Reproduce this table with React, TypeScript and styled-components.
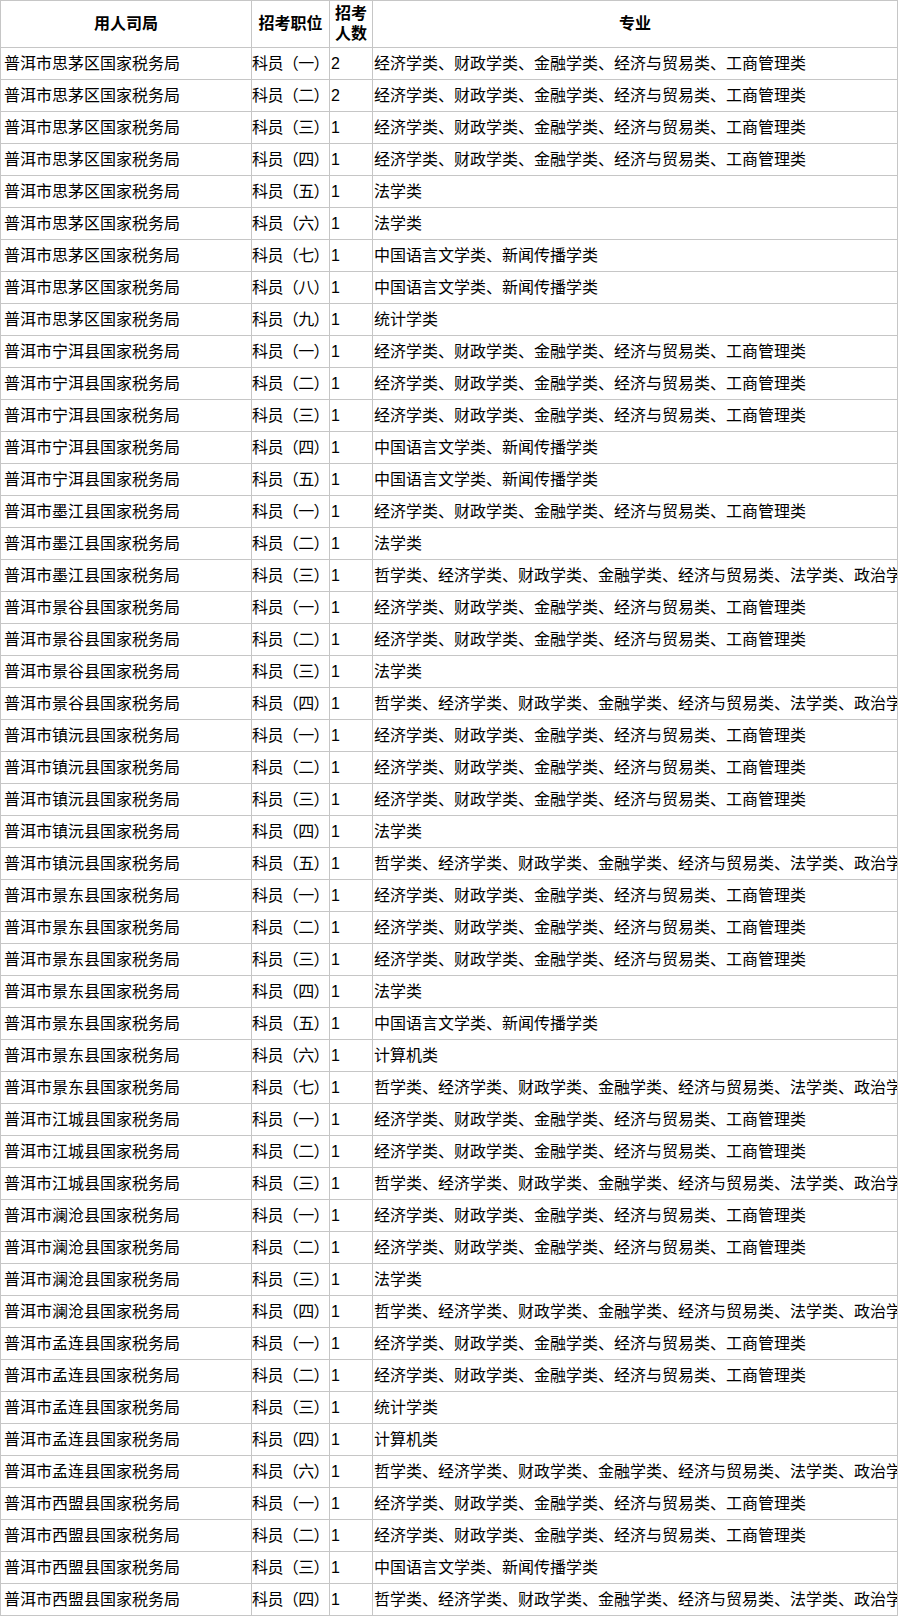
import React from "react";
import styled, { createGlobalStyle } from "styled-components";

const GlobalStyle = createGlobalStyle`
    html, body {
        margin: 0;
        padding: 0;
        background: #ffffff;
    }
    body {
        font-family: "Liberation Sans", "Noto Sans CJK SC", sans-serif;
        color: #000000;
    }
`;

const ECON = "经济学类、财政学类、金融学类、经济与贸易类、工商管理类";
const LAW = "法学类";
const CHN = "中国语言文学类、新闻传播学类";
const STAT = "统计学类";
const COMP = "计算机类";
const PHIL =
    "哲学类、经济学类、财政学类、金融学类、经济与贸易类、法学类、政治学类、社会学类";

const NUMS = ["一", "二", "三", "四", "五", "六", "七", "八", "九"];

type Row = {
    county: string;
    no: number;
    count: number;
    major: string;
};

const r = (county: string, no: number, major: string, count = 1): Row => ({
    county,
    no,
    count,
    major,
});

const rows: Row[] = [
    r("思茅区", 1, ECON, 2),
    r("思茅区", 2, ECON, 2),
    r("思茅区", 3, ECON),
    r("思茅区", 4, ECON),
    r("思茅区", 5, LAW),
    r("思茅区", 6, LAW),
    r("思茅区", 7, CHN),
    r("思茅区", 8, CHN),
    r("思茅区", 9, STAT),
    r("宁洱县", 1, ECON),
    r("宁洱县", 2, ECON),
    r("宁洱县", 3, ECON),
    r("宁洱县", 4, CHN),
    r("宁洱县", 5, CHN),
    r("墨江县", 1, ECON),
    r("墨江县", 2, LAW),
    r("墨江县", 3, PHIL),
    r("景谷县", 1, ECON),
    r("景谷县", 2, ECON),
    r("景谷县", 3, LAW),
    r("景谷县", 4, PHIL),
    r("镇沅县", 1, ECON),
    r("镇沅县", 2, ECON),
    r("镇沅县", 3, ECON),
    r("镇沅县", 4, LAW),
    r("镇沅县", 5, PHIL),
    r("景东县", 1, ECON),
    r("景东县", 2, ECON),
    r("景东县", 3, ECON),
    r("景东县", 4, LAW),
    r("景东县", 5, CHN),
    r("景东县", 6, COMP),
    r("景东县", 7, PHIL),
    r("江城县", 1, ECON),
    r("江城县", 2, ECON),
    r("江城县", 3, PHIL),
    r("澜沧县", 1, ECON),
    r("澜沧县", 2, ECON),
    r("澜沧县", 3, LAW),
    r("澜沧县", 4, PHIL),
    r("孟连县", 1, ECON),
    r("孟连县", 2, ECON),
    r("孟连县", 3, STAT),
    r("孟连县", 4, COMP),
    r("孟连县", 6, PHIL),
    r("西盟县", 1, ECON),
    r("西盟县", 2, ECON),
    r("西盟县", 3, CHN),
    r("西盟县", 4, PHIL),
];

const Table = styled.table`
    border-collapse: collapse;
    table-layout: fixed;
    width: 897px;
    font-family: "Liberation Sans", "Noto Sans CJK SC", sans-serif;
    font-size: 16px;
    color: #000000;
`;

const HeadCell = styled.th`
    height: 46px;
    padding: 0 1px;
    border: 1px solid #c6c6c6;
    font-weight: bold;
    font-size: 16px;
    line-height: 20px;
    text-align: center;
    vertical-align: middle;
    white-space: normal;
`;

const Cell = styled.td<{ $pad?: number; $tight?: boolean }>`
    height: 31px;
    padding: 0 0 0 ${(p) => p.$pad ?? 2}px;
    border: 1px solid #c6c6c6;
    line-height: 20px;
    text-align: left;
    vertical-align: middle;
    white-space: nowrap;
    overflow: hidden;
    font-weight: normal;
    letter-spacing: ${(p) => (p.$tight ? "-0.6px" : "normal")};
`;

function App() {
    return (
        <>
            <GlobalStyle />
            <Table>
                <colgroup>
                    <col style={{ width: 251 }} />
                    <col style={{ width: 78 }} />
                    <col style={{ width: 43 }} />
                    <col style={{ width: 525 }} />
                </colgroup>
                <thead>
                    <tr>
                        <HeadCell>用人司局</HeadCell>
                        <HeadCell>招考职位</HeadCell>
                        <HeadCell>招考人数</HeadCell>
                        <HeadCell>专业</HeadCell>
                    </tr>
                </thead>
                <tbody>
                    {rows.map((row, i) => (
                        <tr key={i}>
                            <Cell $pad={3}>普洱市{row.county}国家税务局</Cell>
                            <Cell $pad={0} $tight>
                                科员（{NUMS[row.no - 1]}）
                            </Cell>
                            <Cell $pad={1}>{row.count}</Cell>
                            <Cell $pad={1}>{row.major}</Cell>
                        </tr>
                    ))}
                </tbody>
            </Table>
        </>
    );
}

export default App;
